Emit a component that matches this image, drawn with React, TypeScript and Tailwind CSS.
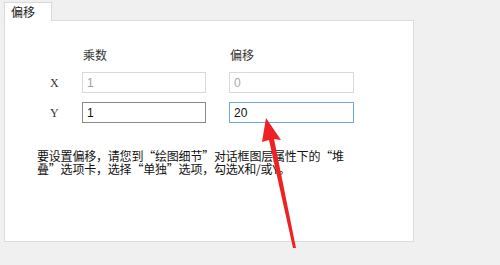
import React from "react";

export default function App() {
  const cjk = { fontFamily: '"Noto Sans CJK SC", "Noto Sans", sans-serif' };
  const sans = { fontFamily: '"Liberation Sans", sans-serif' };
  const serif = { fontFamily: '"Liberation Serif", serif' };
  return (
    <div className="relative w-[500px] h-[265px] bg-[#f0f0f0] overflow-hidden" style={cjk}>
      <div className="pt-[2px] pl-[4px]">
        <div className="relative z-10 w-[48px] h-[19px] bg-white border border-b-0 border-[#d9d9d9] flex items-center pl-[6px] text-[12px] text-[#222] leading-none">
          偏移
        </div>
        <div className="-mt-px w-[410px] h-[222px] bg-white border border-[#dcdcdc]">
          <div className="pt-[26px] pl-[22px]">
            <div className="grid grid-cols-[32px_124px_125px] gap-x-[23px] gap-y-[9px] items-center text-[12px]">
              <div />
              <div className="pl-[1px] h-[16px] leading-[16px] text-[#333]">乘数</div>
              <div className="pl-[1px] h-[16px] leading-[16px] text-[#333]">偏移</div>

              <div className="text-[#333] pl-[23px] leading-none" style={serif}>X</div>
              <div className="h-[21px] border border-[#d9d9d9] flex items-center pl-[4px] text-[#a0a0a0] leading-none" style={sans}>1</div>
              <div className="h-[21px] border border-[#d9d9d9] flex items-center pl-[4px] text-[#a8a8a8] leading-none" style={sans}>0</div>

              <div className="text-[#333] pl-[23px] leading-none" style={serif}>Y</div>
              <div className="h-[21px] border border-[#8a8a8a] flex items-center pl-[4px] text-[#111] leading-none" style={sans}>1</div>
              <div className="h-[21px] border border-[#6fa8e0] flex items-center pl-[4px] text-[#111] leading-none" style={sans}>20</div>
            </div>
          </div>
          <div className="mt-[26px] pl-[32px] text-[12px] leading-[13px] text-[#111] whitespace-nowrap tracking-[-0.2px] [font-feature-settings:'fwid']">
            <div>要设置偏移，请您到“绘图细节”对话框图层属性下的“堆</div>
            <div>叠”选项卡，选择“单独”选项，勾选<span className="[font-feature-settings:normal]">X和/或Y</span>。</div>
          </div>
        </div>
      </div>
      <svg className="absolute left-0 top-0 pointer-events-none" width="500" height="265" viewBox="0 0 500 265">
        <polygon points="266,118 281,140 274,139 296,248 293,248 269,140 262,142" fill="#ee2222" />
      </svg>
    </div>
  );
}
